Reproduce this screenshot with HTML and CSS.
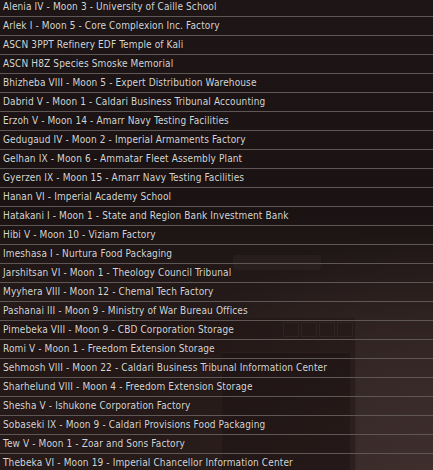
FILE: index.html
```html
<!DOCTYPE html>
<html>
<head>
<meta charset="utf-8">
<link rel="stylesheet" href="styles.css">
</head>
<body>
<div class="scene">
  <div class="ghost-window">
    <div class="ghost-controls"><span></span><span></span><span></span><span></span></div>
    <div class="ghost-panel"></div>
  </div>
  <div class="ghost-button"></div>
  <ul class="list">
    <li class="row">Alenia IV - Moon 3 - University of Caille School</li>
    <li class="row">Arlek I - Moon 5 - Core Complexion Inc. Factory</li>
    <li class="row">ASCN 3PPT Refinery EDF Temple of Kali</li>
    <li class="row">ASCN H8Z Species Smoske Memorial</li>
    <li class="row">Bhizheba VIII - Moon 5 - Expert Distribution Warehouse</li>
    <li class="row">Dabrid V - Moon 1 - Caldari Business Tribunal Accounting</li>
    <li class="row">Erzoh V - Moon 14 - Amarr Navy Testing Facilities</li>
    <li class="row">Gedugaud IV - Moon 2 - Imperial Armaments Factory</li>
    <li class="row">Gelhan IX - Moon 6 - Ammatar Fleet Assembly Plant</li>
    <li class="row">Gyerzen IX - Moon 15 - Amarr Navy Testing Facilities</li>
    <li class="row">Hanan VI - Imperial Academy School</li>
    <li class="row">Hatakani I - Moon 1 - State and Region Bank Investment Bank</li>
    <li class="row">Hibi V - Moon 10 - Viziam Factory</li>
    <li class="row">Imeshasa I - Nurtura Food Packaging</li>
    <li class="row">Jarshitsan VI - Moon 1 - Theology Council Tribunal</li>
    <li class="row">Myyhera VIII - Moon 12 - Chemal Tech Factory</li>
    <li class="row">Pashanai III - Moon 9 - Ministry of War Bureau Offices</li>
    <li class="row">Pimebeka VIII - Moon 9 - CBD Corporation Storage</li>
    <li class="row">Romi V - Moon 1 - Freedom Extension Storage</li>
    <li class="row">Sehmosh VIII - Moon 22 - Caldari Business Tribunal Information Center</li>
    <li class="row">Sharhelund VIII - Moon 4 - Freedom Extension Storage</li>
    <li class="row">Shesha V - Ishukone Corporation Factory</li>
    <li class="row">Sobaseki IX - Moon 9 - Caldari Provisions Food Packaging</li>
    <li class="row">Tew V - Moon 1 - Zoar and Sons Factory</li>
    <li class="row">Thebeka VI - Moon 19 - Imperial Chancellor Information Center</li>
  </ul>
</div>
</body>
</html>
```
FILE: styles.css
```css
html, body {
  margin: 0;
  padding: 0;
  height: 100%;
  overflow: hidden;
}
body {
  background: #1d1515;
}
.scene {
  position: relative;
  width: 433px;
  height: 470px;
  overflow: hidden;
  background:
    radial-gradient(ellipse 300px 240px at 433px 470px, #3e2f2d 0%, rgba(62,47,45,0) 100%),
    linear-gradient(180deg, #1e1616 0%, #1b1313 45%, #271c1b 70%, #312422 100%);
}
.ghost-window {
  position: absolute;
  left: -2px;
  top: 318px;
  width: 357px;
  height: 160px;
  background: rgba(28, 18, 18, 0.45);
  border-right: 1px solid rgba(90, 70, 70, 0.18);
}
.ghost-controls {
  position: absolute;
  right: 2px;
  top: 4px;
  display: flex;
  gap: 2px;
}
.ghost-controls span {
  width: 14px;
  height: 13px;
  border: 1px solid rgba(110, 90, 90, 0.14);
}
.ghost-panel {
  position: absolute;
  left: 224px;
  top: 34px;
  width: 128px;
  height: 130px;
  background: rgba(22, 14, 14, 0.35);
  border-top: 1px solid rgba(100, 80, 80, 0.15);
}
.ghost-button {
  position: absolute;
  left: 233px;
  top: 255px;
  width: 88px;
  height: 15px;
  border-radius: 3px;
  background: rgba(60, 45, 45, 0.3);
}
.list {
  position: relative;
  list-style: none;
  margin: -2px 0 0 0;
  padding: 0;
}
.row {
  height: 18px;
  line-height: 18px;
  border-bottom: 1px solid #5f5656;
  padding-left: 3px;
  color: #d6d6d6;
  font-family: "DejaVu Sans Condensed", "DejaVu Sans", sans-serif;
  font-size: 10px;
  letter-spacing: 0.12px;
  white-space: nowrap;
  text-shadow: 0 0 1px rgba(0,0,0,0.6);
}
```
